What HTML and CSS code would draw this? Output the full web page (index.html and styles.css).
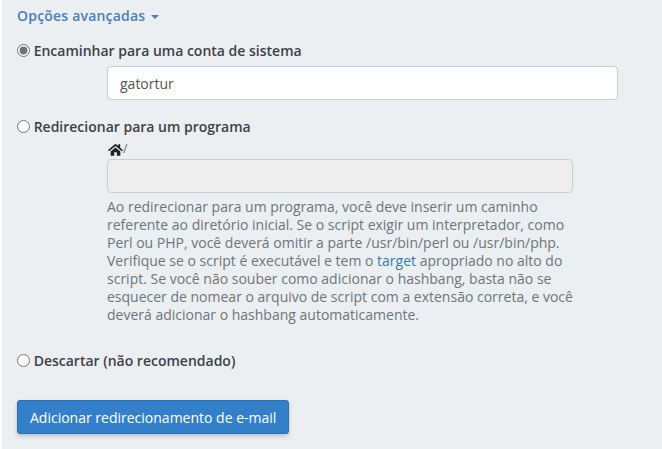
FILE: index.html
```html
<!DOCTYPE html>
<html>
  <head>
    <meta charset="utf-8">
    <title>Redirecionamento de e-mail</title>
    <link rel="stylesheet" href="styles.css">
  </head>
  <body>
    <div class="panel">
      <a class="advanced" href="#">Opções avançadas <span class="caret"></span></a>

      <label class="option first"><input type="radio" name="dest" checked> Encaminhar para uma conta de sistema</label>
      <div class="indent">
        <input class="field wide" type="text" value="gatortur">
      </div>

      <label class="option second"><input type="radio" name="dest"> Redirecionar para um programa</label>
      <div class="indent">
        <div class="home">
          <svg class="home-icon" viewBox="0 0 17 14" width="15" height="13"><path d="M8.5 0.5 L0 7.6 L1.2 9 L8.5 3 L15.8 9 L17 7.6 L13.8 4.9 V1 H11.5 V3 Z M3 9.2 V14 H7 V10 H10 V14 H14 V9.2 L8.5 4.6 Z" fill="#222"/></svg><span>/</span>
        </div>
        <input class="field narrow" type="text" disabled>
        <p class="help">Ao redirecionar para um programa, você deve inserir um caminho referente ao diretório inicial. Se o script exigir um interpretador, como Perl ou PHP, você deverá omitir a parte /usr/bin/perl ou /usr/bin/php. Verifique se o script é executável e tem o <a href="#">target</a> apropriado no alto do script. Se você não souber como adicionar o hashbang, basta não se esquecer de nomear o arquivo de script com a extensão correta, e você deverá adicionar o hashbang automaticamente.</p>
      </div>

      <label class="option third"><input type="radio" name="dest"> Descartar (não recomendado)</label>

      <button class="submit" type="button">Adicionar redirecionamento de e-mail</button>
    </div>
  </body>
</html>
```

FILE: styles.css
```css
html,body{
  margin:0;
  height:100%;
}

body{
  padding-left:2px;
  box-sizing:border-box;
  overflow:hidden;
  background:#fff;
  font-family:"Open Sans",sans-serif;
  font-size:14px;
  line-height:20px;
  color:#333;
}

.panel{
  box-sizing:border-box;
  height:100%;
  padding:6px 0 0 15px;
  background:#ebeff2;
}

.advanced{
  display:block;
  color:#4a7dbd;
  font-weight:600;
  letter-spacing:.2px;
  text-decoration:none;
}

.caret{
  display:inline-block;
  margin-left:2px;
  vertical-align:middle;
  border-top:4px solid #4a7dbd;
  border-left:4px solid transparent;
  border-right:4px solid transparent;
}

.option{
  display:block;
  font-weight:600;
  color:#3d4145;
}

.option input{
  width:13px;
  height:13px;
  margin:0;
  vertical-align:-1px;
  accent-color:#707070;
}

.first{
  margin-top:15px;
}

.second{
  margin-top:17px;
}

.third{
  margin-top:27px;
}

.indent{
  margin-left:90px;
}

.first + .indent{
  margin-top:5px;
}

.field{
  display:block;
  box-sizing:border-box;
  height:34px;
  padding:6px 12px;
  border:1px solid #ccc;
  border-radius:4px;
  background:#fff;
  font:14px "Open Sans",sans-serif;
  color:#555;
}

.wide{
  width:511px;
}

.narrow{
  width:466px;
  background:#eee;
}

.home{
  display:flex;
  align-items:center;
  height:20px;
  margin-top:2px;
  margin-left:1px;
}

.home span{
  font-size:12px;
  color:#666;
}

.help{
  width:470px;
  margin:5px 0 0;
  font-size:14px;
  line-height:18px;
  color:#6f7479;
}

.help a{
  color:#337ab7;
  text-decoration:none;
}

.submit{
  display:block;
  height:34px;
  margin-top:29px;
  padding:0 12px;
  border:1px solid #2a6fb0;
  border-radius:3px;
  background:#337fc9;
  box-shadow:0 2px 4px rgba(0,0,0,.2);
  font:14px "Open Sans",sans-serif;
  color:#fff;
}
```
